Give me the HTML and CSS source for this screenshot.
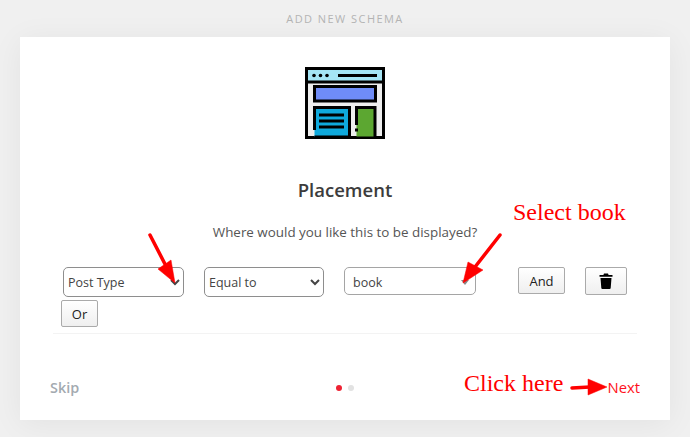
FILE: index.html
```html
<!DOCTYPE html>
<html lang="en">
<head>
    <meta charset="UTF-8">
    <meta name="viewport" content="width=device-width, initial-scale=1.0">
    <title>Add New Schema</title>
    <link rel="stylesheet" href="styles.css">
</head>
<body>
    <div class="page-title">ADD NEW SCHEMA</div>
    <div class="card">
        <div class="hero">
            <svg class="hero-icon" width="80" height="72" viewBox="0 0 80 72">
                <rect x="1.5" y="1.5" width="77" height="69" fill="#eeeeee" stroke="#000" stroke-width="3"/>
                <rect x="3" y="3" width="74" height="11" fill="#a5e5f5"/>
                <line x1="2" y1="15" x2="78" y2="15" stroke="#000" stroke-width="3"/>
                <circle cx="9" cy="8.5" r="1.8" fill="#000"/>
                <circle cx="15.500" cy="8.5" r="1.8" fill="#000"/>
                <circle cx="22" cy="8.5" r="1.8" fill="#000"/>
                <line x1="33" y1="8.5" x2="72" y2="8.500" stroke="#000" stroke-width="3"/>
                <rect x="9.5" y="19.5" width="61" height="14.500" fill="#6f8cf8" stroke="#000" stroke-width="3"/>
                <path d="M9.500 63 V40.500 H44.500 V70 H9.500" fill="#0fa9dc" stroke="#000" stroke-width="3"/>
                <line x1="14" y1="48" x2="39" y2="48" stroke="#000" stroke-width="3"/>
                <line x1="14" y1="54" x2="39" y2="54" stroke="#000" stroke-width="3"/>
                <line x1="14" y1="60" x2="39" y2="60" stroke="#000" stroke-width="3"/>
                <rect x="51.500" y="40.500" width="18" height="29" fill="#5ca731"/>
                <path d="M51.500 58 V40.500 H70 V70" fill="none" stroke="#000" stroke-width="3"/>
                <rect x="50" y="61.500" width="3" height="3" fill="#000"/>
            </svg>
            <h1>Placement</h1>
            <p>Where would you like this to be displayed?</p>
        </div>

        <div class="rule-group">
            <div class="rule-row">
                <select class="field field-type"><option>Post Type</option></select>
                <select class="field field-cond"><option>Equal to</option></select>
                <div class="field field-value">
                    <span>book</span>
                    <i class="caret"></i>
                </div>
                <button class="btn btn-and">And</button>
                <button class="btn btn-trash">
                    <svg width="14" height="16" viewBox="0 0 14 16">
                        <path d="M5 0.500 H9 L9.600 2 H13.500 V3.800 H0.500 V2 H4.400 Z M1.500 5 H12.500 L11.700 15 Q11.600 16 10.600 16 H3.400 Q2.400 16 2.300 15 Z" fill="#000"/>
                    </svg>
                </button>
            </div>
            <button class="btn btn-or">Or</button>
        </div>

        <div class="wizard-footer">
            <a class="skip">Skip</a>
            <div class="dots">
                <span class="dot active"></span>
                <span class="dot"></span>
            </div>
            <a class="next">Next</a>
        </div>

        <!-- annotations drawn on top of the screenshot -->
        <svg class="arrows" width="650" height="383" viewBox="0 0 650 383">
            <g fill="#ff0000" stroke="#ff0000">
                <line x1="130" y1="198" x2="146" y2="229" stroke-width="3.500" stroke-linecap="round"/>
                <polygon points="155,246 151,223 138,232" stroke-width="0.500"/>
                <line x1="480" y1="198" x2="455" y2="230" stroke-width="3.500" stroke-linecap="round"/>
                <polygon points="443,246 463,233 448,225" stroke-width="0.500"/>
                <line x1="552" y1="351" x2="570" y2="350" stroke-width="3.500" stroke-linecap="round"/>
                <polygon points="587,350 568,342 568,358" stroke-width="0.500"/>
            </g>
        </svg>
        <span class="note note-select">Select book</span>
        <span class="note note-click">Click here</span>
    </div>
</body>
</html>
```

FILE: styles.css
```css
* {
    box-sizing: border-box;
}
body {
    font-family: "Open Sans", "Noto Sans", sans-serif;
    margin: 0;
    height: 437px;
    overflow: hidden;
    background-color: #f0f0f0;
    color: #444;
}
.page-title {
    height: 37px;
    padding-top: 12px;
    text-align: center;
    font-size: 11px;
    line-height: 14px;
    letter-spacing: 1.450px;
    color: #b4b4b4;
}
.card {
    position: relative;
    width: 650px;
    height: 383px;
    margin-left: 20px;
    background-color: #fff;
    box-shadow: 0 4px 30px rgba(0, 0, 0, 0.06);
}
.hero {
    text-align: center;
    padding-top: 30px;
}
.hero-icon {
    display: block;
    margin: 0 auto;
}
.hero h1 {
    margin: 39px 0 0;
    font-size: 18.500px;
    line-height: 24px;
    font-weight: 600;
    color: #3c3c3c;
}
.hero p {
    margin: 21px 0 0;
    font-size: 13.400px;
    line-height: 18px;
    color: #555;
}
.rule-group {
    width: 584px;
    height: 67px;
    margin: 26px 0 0 33px;
    border-bottom: 1px solid #f3f3f3;
}
.rule-row {
    display: flex;
    align-items: flex-start;
    padding-left: 10px;
}
.field {
    height: 30px;
    border: 1px solid #8e8e8e;
    border-radius: 5px;
    background-color: #fff;
    font-family: inherit;
    font-size: 12.500px;
    color: #444;
}
.field-type {
    width: 121px;
    margin-right: 20px;
}
.field-cond {
    width: 120px;
    margin-right: 20px;
}
.field-value {
    position: relative;
    width: 132px;
    height: 28px;
    margin-right: 42px;
    padding-left: 8px;
    line-height: 29px;
    border-color: #a5a5a5;
}
.caret {
    position: absolute;
    top: 12px;
    right: 6px;
    border: 4px solid transparent;
    border-top: 5px solid #888;
    border-bottom: 0;
}
.btn {
    height: 27px;
    padding: 0;
    border: 1px solid #aaa;
    border-radius: 2px;
    background: linear-gradient(#fff, #efefef);
    font-family: inherit;
    font-size: 13px;
    color: #222;
}
.btn-and {
    width: 47px;
    margin-right: 20px;
}
.btn-trash {
    width: 42px;
    height: 28px;
    display: flex;
    align-items: center;
    justify-content: center;
}
.btn-or {
    display: block;
    width: 37px;
    margin: 3px 0 0 8px;
}
.wizard-footer {
    display: grid;
    grid-template-columns: 1fr auto 1fr;
    align-items: center;
    margin-top: 44px;
    padding: 0 30px;
    height: 20px;
}
.skip {
    margin-top: -2px;
    font-size: 14.400px;
    font-weight: 600;
    color: #a3aab0;
}
.dots {
    display: flex;
    gap: 6px;
}
.dot {
    width: 6px;
    height: 6px;
    border-radius: 50%;
    background-color: #e2e2e2;
}
.dot.active {
    background-color: #ee2233;
}
.next {
    justify-self: end;
    margin-top: -2px;
    font-size: 14.800px;
    color: #ff1020;
}
.arrows {
    position: absolute;
    top: 0;
    left: 0;
}
.note {
    position: absolute;
    font-family: "Liberation Serif", serif;
    font-size: 24px;
    line-height: 28px;
    color: #ff0000;
    white-space: nowrap;
}
.note-select {
    left: 493px;
    top: 161px;
}
.note-click {
    left: 444px;
    top: 332px;
}
```
